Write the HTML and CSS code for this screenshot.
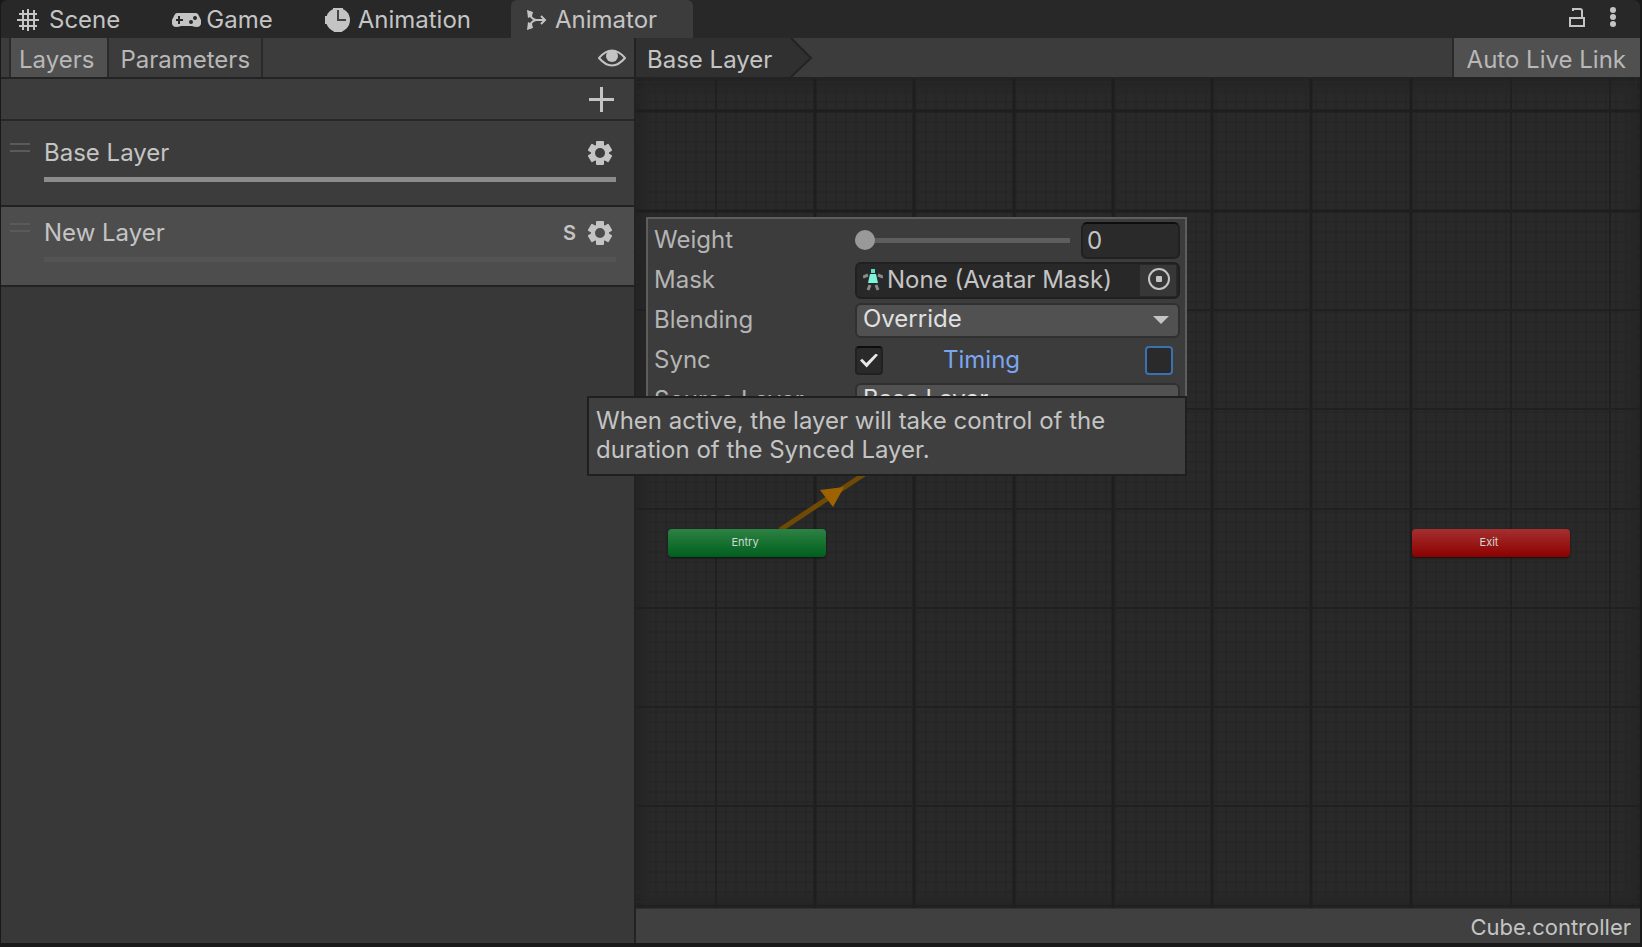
FILE: index.html
```html
<!DOCTYPE html>
<html lang="en">
<head>
<meta charset="utf-8">
<title>Animator</title>
<link rel="stylesheet" href="styles.css">
</head>
<body>
<div class="window">
  <header class="tabbar">
    <nav class="tabs">
      <button class="tab"><svg class="icon" width="22" height="22" viewBox="0 0 22 22" fill="none" stroke="currentColor" stroke-width="2"><path d="M6 1v20M11 0v22M17 1v20M2 5h18M0 11h22M2 17h18"/></svg>Scene</button>
      <button class="tab tab-game"><svg class="icon" width="29" height="18" viewBox="0 0 29 18"><path fill="currentColor" d="M5 2H24Q26 2 27 5L29 9V13Q28 16 25 16Q22 16 20 15H9Q7 16 4 16Q1 16 0 13V9L2 5Q3 2 5 2Z"/><path d="M7 5v8M4 9h7" stroke="#282828" stroke-width="2"/><circle cx="23" cy="7" r="2" fill="#282828"/><circle cx="19" cy="11" r="2" fill="#282828"/></svg>Game</button>
      <button class="tab tab-animation"><svg class="icon" width="25" height="26" viewBox="0 0 25 26"><path fill="currentColor" d="M8 1H18V5H8ZM8 22H18L17 25H9ZM0 9H4V17H0Z"/><circle cx="13" cy="13" r="12" fill="currentColor"/><path d="M13 3v10h8" fill="none" stroke="#444" stroke-width="2"/></svg>Animation</button>
      <button class="tab tab-active"><svg class="icon" width="20" height="20" viewBox="0 0 20 20" fill="none" stroke="currentColor" stroke-width="2"><path d="M2 3C4 7 5 9 9 10H18M2 17C4 13 5 11 9 10M14 6L18 10L14 14"/><path fill="currentColor" stroke="none" d="M0 0L6 2L5 6L1 8ZM0 20L6 18L5 14L1 12Z"/></svg>Animator</button>
    </nav>
    <div class="window-tools">
      <button class="tool" aria-label="Lock"><svg width="18" height="20" viewBox="0 0 18 20" fill="none" stroke="currentColor" stroke-width="2"><path d="M2 11H16V19H2ZM5 4V2H12Q14 2 14 4V11"/></svg></button>
      <button class="tool" aria-label="Menu"><svg width="6" height="20" viewBox="0 0 6 20" fill="currentColor"><circle cx="3" cy="3" r="3"/><circle cx="3" cy="10" r="3"/><circle cx="3" cy="17" r="3"/></svg></button>
    </div>
  </header>

  <div class="body">
    <aside class="sidebar">
      <div class="toolbar">
        <button class="view-tab view-tab-active">Layers</button>
        <button class="view-tab">Parameters</button>
        <button class="tool eye" aria-label="Toggle visibility"><svg width="28" height="18" viewBox="0 0 28 18"><path d="M1 9Q14 -6 27 9Q14 24 1 9Z" fill="none" stroke="currentColor" stroke-width="2"/><circle cx="14" cy="7" r="6" fill="currentColor"/></svg></button>
      </div>
      <div class="add-row">
        <button class="tool" aria-label="Add layer"><svg width="25" height="25" viewBox="0 0 25 25"><path d="M12.500 0V25M0 12.500H25" stroke="currentColor" stroke-width="3"/></svg></button>
      </div>
      <ul class="layers">
        <li class="layer">
          <span class="handle"></span>
          <div class="layer-main">
            <div class="layer-title"><span class="layer-name">Base Layer</span>
              <button class="tool" aria-label="Base Layer settings"><svg width="24" height="24" viewBox="0 0 24 24"><g fill="currentColor"><circle cx="12" cy="12" r="9"/><rect x="8" y="0" width="8" height="24" rx="1"/><rect x="8" y="0" width="8" height="24" rx="1" transform="rotate(60 12 12)"/><rect x="8" y="0" width="8" height="24" rx="1" transform="rotate(120 12 12)"/></g><circle class="gear-hole" cx="12" cy="12" r="5"/></svg></button></div>
            <div class="weight weight-full"></div>
          </div>
        </li>
        <li class="layer layer-selected">
          <span class="handle"></span>
          <div class="layer-main">
            <div class="layer-title"><span class="layer-name">New Layer</span><span class="sync-mark">S</span>
              <button class="tool" aria-label="New Layer settings"><svg width="24" height="24" viewBox="0 0 24 24"><g fill="currentColor"><circle cx="12" cy="12" r="9"/><rect x="8" y="0" width="8" height="24" rx="1"/><rect x="8" y="0" width="8" height="24" rx="1" transform="rotate(60 12 12)"/><rect x="8" y="0" width="8" height="24" rx="1" transform="rotate(120 12 12)"/></g><circle class="gear-hole" cx="12" cy="12" r="5"/></svg></button></div>
            <div class="weight"></div>
          </div>
        </li>
      </ul>
    </aside>

    <main class="workspace">
      <div class="toolbar">
        <button class="crumb">Base Layer</button>
        <svg class="crumb-tip" width="23" height="39" viewBox="0 0 23 39"><path d="M0 0H1L21 20L1 39H0Z" fill="#303030"/><path d="M1 0L21 20L1 39" fill="none" stroke="#232323" stroke-width="2"/></svg>
        <button class="live-link">Auto Live Link</button>
      </div>

      <div class="canvas">
        <svg class="grid" width="100%" height="100%">
          <defs><pattern id="minor" width="10" height="10" x="9" y="2" patternUnits="userSpaceOnUse"><path d="M0 1H10M1 0V10" stroke="#262626" stroke-width="2"/></pattern></defs>
          <rect width="100%" height="100%" fill="url(#minor)"/>
          <path stroke="#1e1e1e" stroke-width="3" d="M179 0V2000M278 0V2000M378 0V2000M477 0V2000M576 0V2000M675 0V2000M775 0V2000M0 32H3000M0 132H3000"/>
          <path stroke="#202020" stroke-width="2" d="M80 0V2000M875 0V2000M974 0V2000M0 231H3000M0 330H3000M0 430H3000M0 529H3000M0 628H3000M0 727H3000M0 827H3000"/>
          <path d="M144 451L236 390" stroke="#6f4a06" stroke-width="5"/>
          <path d="M184 411L208 408L197 428Z" fill="#9c6300"/>
        </svg>
        <div class="node node-entry">Entry</div>
        <div class="node node-exit">Exit</div>

        <form class="popup">
          <label for="weight">Weight</label>
          <div class="field weight-field">
            <input class="slider" id="weight" type="range" min="0" max="1" step="0.01" value="0">
            <input class="number" type="text" value="0" aria-label="Weight value">
          </div>
          <label for="mask">Mask</label>
          <div class="field object-field">
            <svg width="20" height="22" viewBox="0 0 20 22"><path fill="#5fe0c4" d="M8 0H12V4H8Z"/><path fill="#7df5dc" d="M7 5H13L15 14H5Z"/><path d="M5 6L0 8M15 6L20 8M7 16L5 21M13 16L15 21" fill="none" stroke="#8a8a8a" stroke-width="3"/></svg>
            <span class="object-name">None (Avatar Mask)</span>
            <button class="picker" id="mask" type="button" aria-label="Pick mask"><svg width="22" height="22" viewBox="0 0 22 22"><circle cx="11" cy="11" r="10" fill="none" stroke="currentColor" stroke-width="2"/><rect x="8" y="8" width="6" height="6" rx="1" fill="currentColor"/></svg></button>
          </div>
          <label for="blending">Blending</label>
          <div class="field"><select class="select" id="blending"><option>Override</option><option>Additive</option></select><span class="arrow"></span></div>
          <label for="sync">Sync</label>
          <div class="field sync-field">
            <input class="check" id="sync" type="checkbox" checked>
            <label class="timing" for="timing">Timing</label>
            <input class="check check-focus" id="timing" type="checkbox">
          </div>
          <label for="source">Source Layer</label>
          <div class="field"><select class="select" id="source"><option>Base Layer</option></select><span class="arrow"></span></div>
        </form>
        <div class="tooltip" role="tooltip">When active, the layer will take control of the duration of the Synced Layer.</div>
      </div>

      <footer class="status">Cube.controller</footer>
    </main>
  </div>
</div>
</body>
</html>
```
FILE: styles.css
```css
* { box-sizing: border-box; }

body {
  margin: 0;
  background: #191919;
  color: #c4c4c4;
  font: 24px/28px Inter, "Liberation Sans", sans-serif;
  font-optical-sizing: none;
}

button, input, select {
  margin: 0;
  padding: 0;
  border: 0;
  background: none;
  color: inherit;
  font: inherit;
  font-optical-sizing: none;
}

svg { display: block; flex: none; }

.window {
  display: flex;
  flex-direction: column;
  height: 100vh;
  padding: 0 2px 4px 1px;
}

.tabbar {
  display: flex;
  justify-content: space-between;
  height: 38px;
  background: #282828;
  border-radius: 6px 6px 0 0;
}

.tabs { display: flex; }

.tab {
  display: flex;
  align-items: center;
  gap: 10px;
  padding: 2px 36px 0 16px;
}

.tab-game { gap: 5px; }

.tab-animation { gap: 8px; padding-right: 40px; }

.tab-active {
  gap: 8px;
  background: #3c3c3c;
  border-radius: 6px 6px 0 0;
}

.window-tools {
  display: flex;
  align-items: center;
  gap: 24px;
  padding: 0 24px 4px 0;
}

.tool { color: #c4c4c4; }

.body { display: flex; flex: 1; min-height: 0; }

.sidebar {
  flex: 0 0 635px;
  background: #383838;
  border-right: 2px solid #222;
}

.toolbar {
  display: flex;
  height: 41px;
  background: #3c3c3c;
  border-bottom: 2px solid #232323;
}

.sidebar .toolbar { padding-left: 8px; }

.view-tab {
  padding: 4px 11px 0 11px;
  border-right: 2px solid #2a2a2a;
  color: #b8b8b8;
}

.view-tab-active { background: #505050; border-left: 2px solid #2a2a2a; padding: 4px 13px 0 8px; }

.eye { margin: 0 8px 0 auto; }

.add-row {
  display: flex;
  justify-content: flex-end;
  align-items: center;
  height: 42px;
  padding-right: 20px;
  background: #3c3c3c;
  border-bottom: 2px solid #272727;
}

.layers { margin: 0; padding: 0; list-style: none; }

.layer {
  display: flex;
  height: 80px;
  padding: 12px 18px 0 9px;
  background: #3c3c3c;
  border-bottom: 2px solid #222;
}

.layer:first-child { height: 86px; padding-top: 18px; }

.layer-selected { background: #4d4d4d; }

.handle {
  width: 20px;
  height: 9px;
  margin: 4px 14px 0 0;
  border: solid #5a5a5a;
  border-width: 2px 0;
}

.layer-main { flex: 1; }

.layer-title { display: flex; align-items: center; }

.layer-name { flex: 1; }

.layer-title .tool { margin: 0 4px 0 12px; }

.gear-hole { fill: #3c3c3c; }
.layer-selected .gear-hole { fill: #4d4d4d; }

.sync-mark { font-size: 20px; font-weight: 600; }

.weight { height: 5px; margin-top: 10px; background: #545454; }
.weight-full { background: #8c8c8c; }

.workspace {
  display: flex;
  flex: 1;
  flex-direction: column;
  min-width: 0;
}

.crumb { padding: 4px 18px 0 11px; background: #303030; }

.live-link {
  margin-left: auto;
  padding: 4px 14px 0 13px;
  background: #505050;
  border-left: 2px solid #2a2a2a;
  color: #b8b8b8;
}

.canvas {
  position: relative;
  flex: 1;
  background: #292929;
  box-shadow: inset 0 0 14px #1c1c1c;
}

.grid { position: absolute; inset: 0; }

.node {
  position: absolute;
  top: 450px;
  width: 158px;
  height: 28px;
  padding-right: 4px;
  border-radius: 4px;
  color: #d0d8d0;
  font-size: 11px;
  line-height: 26px;
  text-align: center;
  box-shadow: 0 1px 2px #111;
}

.node-entry { left: 32px; background: linear-gradient(#2d8243, #005f1e); }
.node-exit { left: 776px; background: linear-gradient(#a53030, #8c0000); }

.popup {
  position: absolute;
  top: 138px;
  left: 10px;
  display: grid;
  grid-template-columns: 201px 1fr;
  grid-auto-rows: 40px;
  align-items: center;
  width: 541px;
  padding: 1px 5px 1px 6px;
  background: #3c3c3c;
  border: 2px solid #5e5e5e;
  color: #b4b4b4;
}

.field { position: relative; display: flex; align-items: center; }

.weight-field { gap: 11px; }

.slider {
  flex: 1;
  min-width: 0;
  height: 22px;
  appearance: none;
}

.slider::-webkit-slider-runnable-track { height: 5px; background: #5e5e5e; }

.slider::-webkit-slider-thumb {
  width: 20px;
  height: 20px;
  margin-top: -8px;
  appearance: none;
  background: #999;
  border-radius: 50%;
}

.number {
  width: 99px;
  height: 37px;
  padding: 0 4px;
  background: #2a2a2a;
  border: 2px solid #212121;
  border-top-color: #0d0d0d;
  border-radius: 6px;
  color: #c4c4c4;
}

.object-field {
  height: 37px;
  gap: 4px;
  padding: 1px 2px 1px 6px;
  background: #282828;
  border: 2px solid #202020;
  border-radius: 6px;
  color: #c4c4c4;
}

.object-name { flex: 1; white-space: nowrap; }

.picker { align-self: stretch; padding: 0 6px 2px 8px; background: #373737; }

.select {
  width: 100%;
  height: 35px;
  padding: 0 8px 3px 6px;
  appearance: none;
  background: #515151;
  border: 2px solid #303030;
  border-radius: 6px;
  color: #e0e0e0;
}

.arrow {
  position: absolute;
  top: 13px;
  right: 11px;
  border: 8px solid transparent;
  border-bottom: 0;
  border-top-color: #c4c4c4;
  pointer-events: none;
}

.check {
  width: 28px;
  height: 29px;
  appearance: none;
  background: #2a2a2a;
  border: 2px solid #212121;
  border-top-color: #0d0d0d;
  border-radius: 4px;
}

.check:checked::before {
  content: "";
  display: block;
  width: 18px;
  height: 14px;
  margin: 6px 3px;
  background: #e8e8e8;
  clip-path: polygon(0 50%, 12% 38%, 35% 68%, 88% 0, 100% 10%, 37% 100%);
}

.check-focus { margin: 0 7px 0 auto; border-color: #3a72b0; }

.timing { margin-left: 60px; color: #7ba5ef; }

.tooltip {
  position: absolute;
  top: 317px;
  left: -49px;
  width: 600px;
  padding: 8px 7px 10px;
  background: #3f3f3f;
  border: 2px solid #1f1f1f;
  line-height: 29px;
  z-index: 1;
}

.status {
  height: 35px;
  padding: 5px 9px 0 0;
  background: #404040;
  border-top: 1px solid #303030;
  font-size: 22px;
  line-height: 26px;
  text-align: right;
}
```
